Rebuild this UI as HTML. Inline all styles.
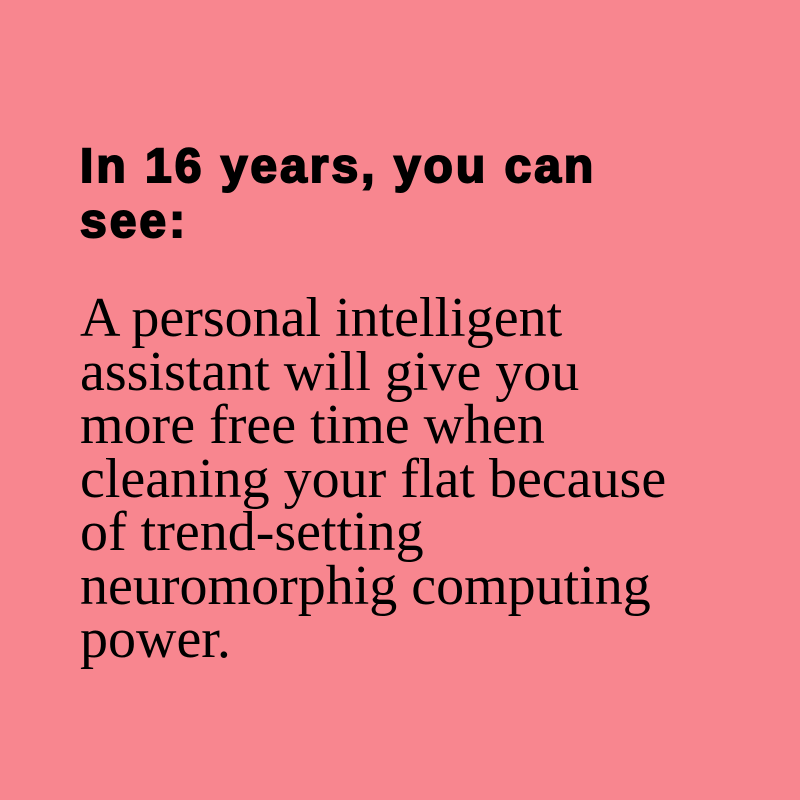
<!DOCTYPE html>
<html><head><meta charset="utf-8"><style>
html,body{margin:0;padding:0}
body{width:800px;height:800px;background:#f8868f;position:relative;overflow:hidden}
h1{position:absolute;left:80px;top:139px;margin:0;font-family:"Liberation Sans",sans-serif;font-weight:bold;font-size:48px;line-height:55px;color:#000;width:700px;letter-spacing:3px;-webkit-text-stroke:2px #000}
p{position:absolute;left:80px;top:292px;margin:0;font-family:"Liberation Serif",serif;font-size:56px;line-height:53.5px;color:#000;width:720px}
</style></head><body>
<h1>In 16 years, you can<br>see:</h1>
<p>A personal intelligent<br>assistant will give you<br>more free time when<br>cleaning your flat because<br>of trend-setting<br>neuromorphig computing<br>power.</p>
</body></html>
